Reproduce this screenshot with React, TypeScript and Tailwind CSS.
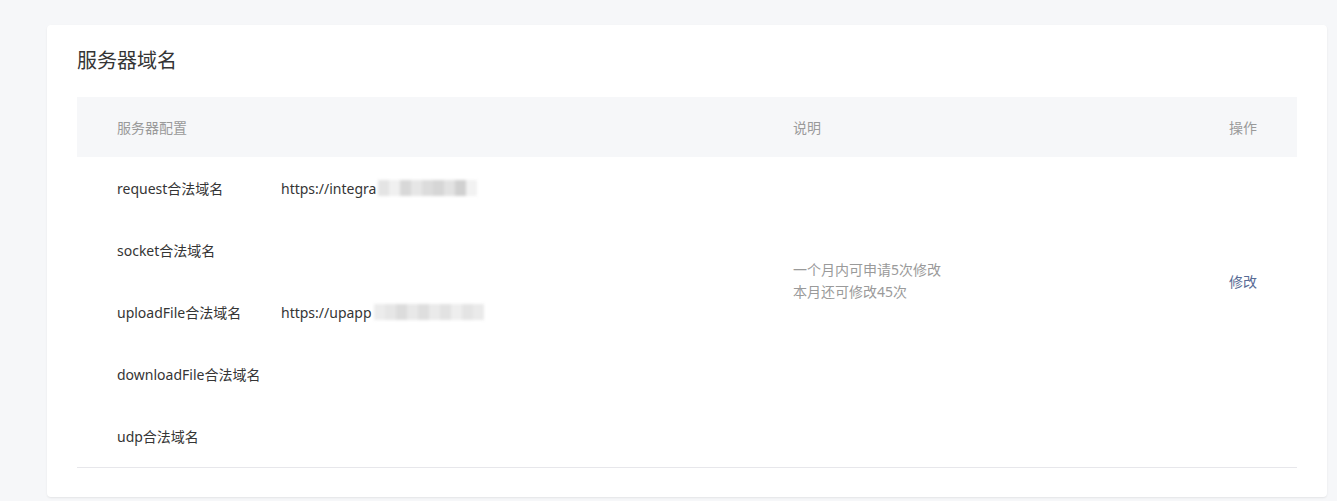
import React from "react";

const rows = [
	{ name: "request合法域名", url: "https://integra", blur: [0xe4, 0xf0, 0xd8, 0xe6, 0xdc, 0xd6, 0xe2, 0xd0, 0xf2] },
	{ name: "socket合法域名", url: "", blur: [] },
	{ name: "uploadFile合法域名", url: "https://upapp", blur: [0xec, 0xe6, 0xdc, 0xe8, 0xde, 0xea, 0xe2, 0xee, 0xe4, 0xea] },
	{ name: "downloadFile合法域名", url: "", blur: [] },
	{ name: "udp合法域名", url: "", blur: [] },
];

const Blurred: React.FC<{ shades: number[] }> = ({ shades }) => (
	<span className="ml-[2px] inline-flex h-[16px] blur-[1.5px]">
		{shades.map((s, i) => (
			<span
				key={i}
				className="w-[11px] h-full"
				style={{ backgroundColor: `rgb(${s},${s},${s})` }}
			/>
		))}
	</span>
);

const App: React.FC = () => {
	return (
		<div
			className="min-h-[501px] bg-[#f6f7f9] pt-[25px] pl-[47px]"
			style={{ fontFamily: '"Noto Sans", "Noto Sans CJK SC", sans-serif' }}
		>
			<div className="w-[1280px] bg-white rounded-[4px] shadow-[0_1px_2px_rgba(0,0,0,0.08)] px-[30px] pt-[22px] pb-[29px]">
				<h2 className="text-[20px] leading-[28px] text-[#353535] mb-[22px]">
					服务器域名
				</h2>
				<div className="w-[1220px]">
					<div className="flex items-center h-[60px] bg-[#f6f7f9] text-[14px] text-[#9a9a9a] px-[40px]">
						<div className="w-[676px]">服务器配置</div>
						<div className="flex-1">说明</div>
						<div>操作</div>
					</div>
					<div className="flex border-b border-[#e7e7eb] text-[14px]">
						<div className="w-[716px] pl-[40px]">
							{rows.map((row) => (
								<div key={row.name} className="flex items-center h-[62px] text-[#353535]">
									<span className="w-[164px]">{row.name}</span>
									{row.url && (
										<span className="flex items-center">
											{row.url}
											<Blurred shades={row.blur} />
										</span>
									)}
								</div>
							))}
						</div>
						<div className="flex-1 flex items-center pb-[62px] text-[#9a9a9a] leading-[22px]">
							<div>
								<p>一个月内可申请5次修改</p>
								<p>本月还可修改45次</p>
							</div>
						</div>
						<div className="flex items-center pb-[62px] pr-[40px]">
							<a className="text-[#576b95] cursor-pointer">修改</a>
						</div>
					</div>
				</div>
			</div>
		</div>
	);
};

export default App;
